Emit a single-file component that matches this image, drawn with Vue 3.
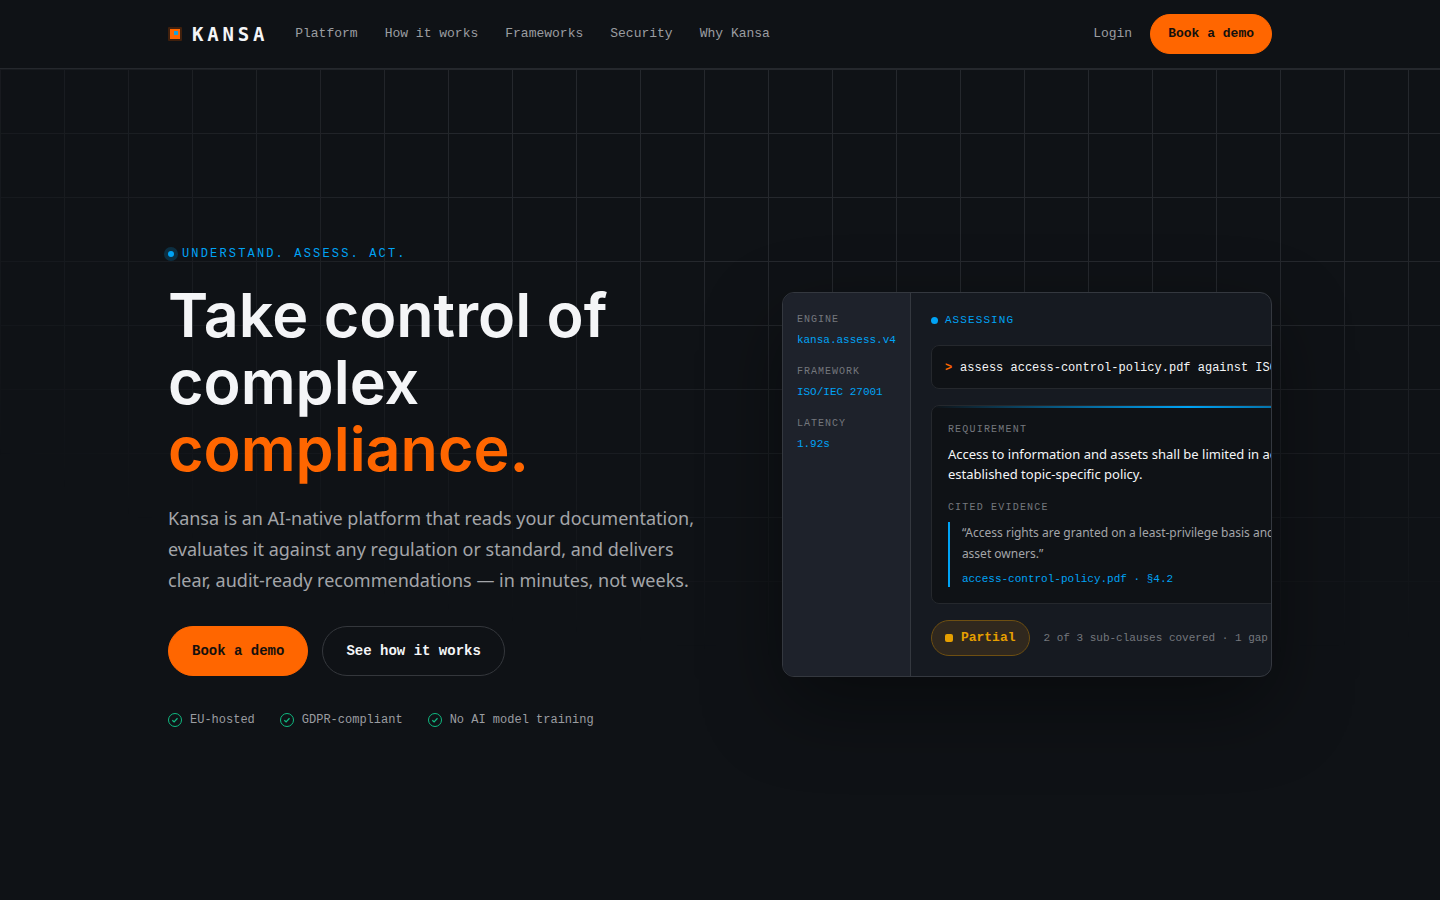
<script setup>
const navLinks = ['Platform', 'How it works', 'Frameworks', 'Security', 'Why Kansa']

const trustItems = ['EU-hosted', 'GDPR-compliant', 'No AI model training']

// engine metadata shown in the left rail of the console
const metaItems = [
  { label: 'Engine', value: 'kansa.assess.v4' },
  { label: 'Framework', value: 'ISO/IEC 27001' },
  { label: 'Latency', value: '1.92s' }
]
</script>

<template>
  <div class="page">
    <header class="site-header">
      <div class="container header-inner">
        <a class="brand" href="#">
          <svg class="brand-mark" viewBox="0 0 14 14" aria-hidden="true">
            <rect width="14" height="14" rx="1" fill="#40200d" />
            <rect x="2" y="2" width="10" height="10" fill="#ff6600" />
            <rect x="6" y="4" width="4" height="4" fill="#1c9fd8" />
          </svg>
          <span class="brand-name">KANSA</span>
        </a>
        <nav class="nav">
          <a v-for="link in navLinks" :key="link" class="nav-link" href="#">{{ link }}</a>
        </nav>
        <div class="header-actions">
          <a class="nav-link" href="#">Login</a>
          <button class="btn btn-primary btn-small" type="button">Book a demo</button>
        </div>
      </div>
    </header>

    <main class="hero">
      <div class="hero-grid" aria-hidden="true"></div>
      <div class="container hero-inner">
        <section class="intro">
          <p class="eyebrow"><span class="eyebrow-dot"></span>Understand. Assess. Act.</p>
          <h1>Take control of complex <span class="accent">compliance.</span></h1>
          <p class="lead">
            Kansa is an AI-native platform that reads your documentation, evaluates it against any
            regulation or standard, and delivers clear, audit-ready recommendations — in minutes, not weeks.
          </p>
          <div class="cta">
            <button class="btn btn-primary" type="button">Book a demo</button>
            <button class="btn btn-outline" type="button">See how it works</button>
          </div>
          <ul class="trust">
            <li v-for="item in trustItems" :key="item">
              <svg viewBox="0 0 14 14" aria-hidden="true">
                <circle cx="7" cy="7" r="6.5" />
                <path d="M4.3 7.2 6.1 8.9 9.5 5.3" stroke-width="1.3" />
              </svg>
              {{ item }}
            </li>
          </ul>
        </section>

        <section class="console">
          <aside class="rail">
            <div v-for="meta in metaItems" :key="meta.label" class="meta">
              <span class="label">{{ meta.label }}</span>
              <span class="meta-value">{{ meta.value }}</span>
            </div>
          </aside>

          <div class="console-body">
            <div class="status"><span class="status-dot"></span>Assessing</div>

            <div class="command">
              <span class="prompt">&gt;</span>
              <span>assess access-control-policy.pdf against ISO/IEC 27001 A.5.15</span>
            </div>

            <div class="result">
              <span class="label">Requirement</span>
              <p class="requirement">
                Access to information and assets shall be limited in accordance with the
                established topic-specific policy.
              </p>
              <span class="label">Cited evidence</span>
              <blockquote>
                <p>“Access rights are granted on a least-privilege basis and reviewed by asset owners.”</p>
                <cite>access-control-policy.pdf · §4.2</cite>
              </blockquote>
            </div>

            <div class="verdict">
              <span class="badge"><span class="badge-mark"></span>Partial</span>
              <span class="verdict-note">2 of 3 sub-clauses covered · 1 gap found</span>
            </div>
          </div>
        </section>
      </div>
    </main>
  </div>
</template>

<style>
body {
  background: #0f1216;
}
</style>

<style scoped>
.page {
  --mono: "Liberation Mono", monospace;
  --sans: "Noto Sans", "Liberation Sans", sans-serif;
  --blue: #00a3f5;
  --orange: #ff6600;
  --line: #25282d;
  --muted: #9b9da1;
  min-height: 100vh;
  background: #0f1216;
  color: #f4f5f7;
  font-family: var(--sans);
  overflow: hidden;
}

.page * {
  box-sizing: border-box;
}

p, h1, ul, blockquote {
  margin: 0;
  padding: 0;
}

a {
  color: inherit;
  text-decoration: none;
}

.container {
  width: 100%;
  max-width: 1200px;
  margin: 0 auto;
  padding: 0 48px;
}

/* header */
.site-header {
  border-bottom: 1px solid var(--line);
}

.header-inner {
  display: flex;
  align-items: center;
  gap: 27px;
  padding-top: 14px;
  padding-bottom: 14px;
}

.brand {
  display: flex;
  align-items: center;
  gap: 10px;
}

.brand-mark {
  width: 14px;
  height: 14px;
}

.brand-name {
  font: bold 19px/24px "DejaVu Sans Mono", monospace;
  letter-spacing: 0.2em;
}

.nav {
  display: flex;
  gap: 27px;
}

.nav-link {
  font: 13px/20px var(--mono);
  color: var(--muted);
  white-space: nowrap;
}

.header-actions {
  display: flex;
  align-items: center;
  gap: 18px;
  margin-left: auto;
}

.btn {
  height: 50px;
  padding: 0 23px;
  border: 1px solid transparent;
  border-radius: 25px;
  font: bold 14px/20px var(--mono);
  white-space: nowrap;
  cursor: pointer;
}

.btn-primary {
  background: var(--orange);
  border-color: var(--orange);
  color: #14100d;
}

.btn-outline {
  background: transparent;
  border-color: #34373c;
  color: #f4f5f7;
}

.btn-small {
  height: 40px;
  padding: 0 17px;
  font-size: 13px;
}

/* hero */
.hero {
  position: relative;
  display: flex;
  align-items: center;
  min-height: 92vh;
  padding: 75px 0 72px;
  box-sizing: border-box;
}

.hero-grid {
  position: absolute;
  inset: 0;
  background-image:
    linear-gradient(to right, var(--line) 1px, transparent 1px),
    linear-gradient(to bottom, var(--line) 1px, transparent 1px);
  background-size: 64px 64px;
  mask-image: radial-gradient(ellipse 92% 72% at 70% 0%, #000 40%, transparent 100%);
}

.hero-inner {
  position: relative;
  display: grid;
  grid-template-columns: minmax(0, 1.122fr) minmax(0, 1fr);
  gap: 64px;
  align-items: center;
}

.eyebrow {
  display: flex;
  align-items: center;
  gap: 8px;
  margin-bottom: 16px;
  font: 12px/24px var(--mono);
  letter-spacing: 0.18em;
  text-transform: uppercase;
  color: var(--blue);
}

.eyebrow-dot {
  width: 6px;
  height: 6px;
  border-radius: 50%;
  background: var(--blue);
  box-shadow: 0 0 0 4px rgba(0, 163, 245, 0.2);
}

h1 {
  max-width: 500px;
  font: 600 61px/67px Inter, "Liberation Sans", sans-serif;
}

.accent {
  display: block;
  color: var(--orange);
}

.lead {
  margin-top: 20px;
  max-width: 550px;
  font-size: 18px;
  line-height: 31px;
  color: #a3a5a9;
}

.cta {
  display: flex;
  gap: 14px;
  margin-top: 30px;
}

.trust {
  display: flex;
  flex-wrap: wrap;
  gap: 25px;
  margin-top: 36px;
  list-style: none;
  font: 12px/16px var(--mono);
  color: var(--muted);
}

.trust li {
  display: flex;
  align-items: center;
  gap: 8px;
}

.trust svg {
  width: 14px;
  height: 14px;
  fill: none;
  stroke: #10b981;
}

/* console */
.console {
  display: grid;
  grid-template-columns: 128px minmax(554px, 1fr);
  border: 1px solid #34383f;
  border-radius: 12px;
  background: #161a21;
  box-shadow: 0 30px 80px rgba(0, 0, 0, 0.4);
  overflow: hidden;
}

.rail {
  display: flex;
  flex-direction: column;
  gap: 16px;
  padding: 19px 14px;
  border-right: 1px solid #34383f;
  background: #1e222b;
}

.meta {
  display: flex;
  flex-direction: column;
  gap: 4px;
}

.label {
  display: block;
  font: 10px/16px var(--mono);
  letter-spacing: 0.1em;
  text-transform: uppercase;
  color: #74777d;
}

.meta-value {
  font: 11px/16px var(--mono);
  white-space: nowrap;
  color: var(--blue);
}

.console-body {
  padding: 20px;
}

.status {
  display: flex;
  align-items: center;
  gap: 7px;
  margin-bottom: 18px;
  font: 11px/14px var(--mono);
  letter-spacing: 0.1em;
  text-transform: uppercase;
  color: var(--blue);
}

.status-dot {
  width: 7px;
  height: 7px;
  border-radius: 50%;
  background: var(--blue);
}

.command {
  display: flex;
  gap: 8px;
  margin-bottom: 16px;
  padding: 13px 13px 11px;
  border: 1px solid var(--line);
  border-radius: 8px;
  background: #0f1216;
  font: 12px/18px var(--mono);
  white-space: nowrap;
}

.prompt {
  font-weight: bold;
  color: var(--orange);
}

.result {
  position: relative;
  padding: 16px;
  border: 1px solid var(--line);
  border-radius: 8px;
  background: #0f1216;
  overflow: hidden;
}

.result::before {
  content: "";
  position: absolute;
  top: 0;
  left: 0;
  right: 0;
  height: 2px;
  background: linear-gradient(to right, transparent, var(--blue), transparent);
}

.result .label {
  letter-spacing: 0.12em;
}

.requirement {
  margin: 6px 0 16px;
  font-size: 13px;
  line-height: 20px;
}

blockquote {
  margin-top: 6px;
  padding-left: 12px;
  border-left: 2px solid var(--blue);
}

blockquote p {
  max-width: 400px;
  font-size: 12px;
  line-height: 21px;
  color: #a3a5a9;
}

cite {
  display: block;
  margin-top: 8px;
  font: 11px/15px var(--mono);
  color: var(--blue);
}

.verdict {
  display: flex;
  align-items: center;
  gap: 14px;
  margin-top: 16px;
}

.badge {
  display: flex;
  align-items: center;
  gap: 8px;
  height: 36px;
  padding: 0 13px;
  border: 1px solid #6e4f12;
  border-radius: 18px;
  background: #30281e;
  font: bold 13px/20px var(--mono);
  color: #e69f00;
}

.badge-mark {
  width: 8px;
  height: 8px;
  border-radius: 2px;
  background: #e69f00;
}

.verdict-note {
  font: 11px/16px var(--mono);
  white-space: nowrap;
  color: #74777d;
}

@media (max-width: 900px) {
  .nav {
    display: none;
  }

  .hero-inner {
    grid-template-columns: minmax(0, 1fr);
  }
}
</style>
